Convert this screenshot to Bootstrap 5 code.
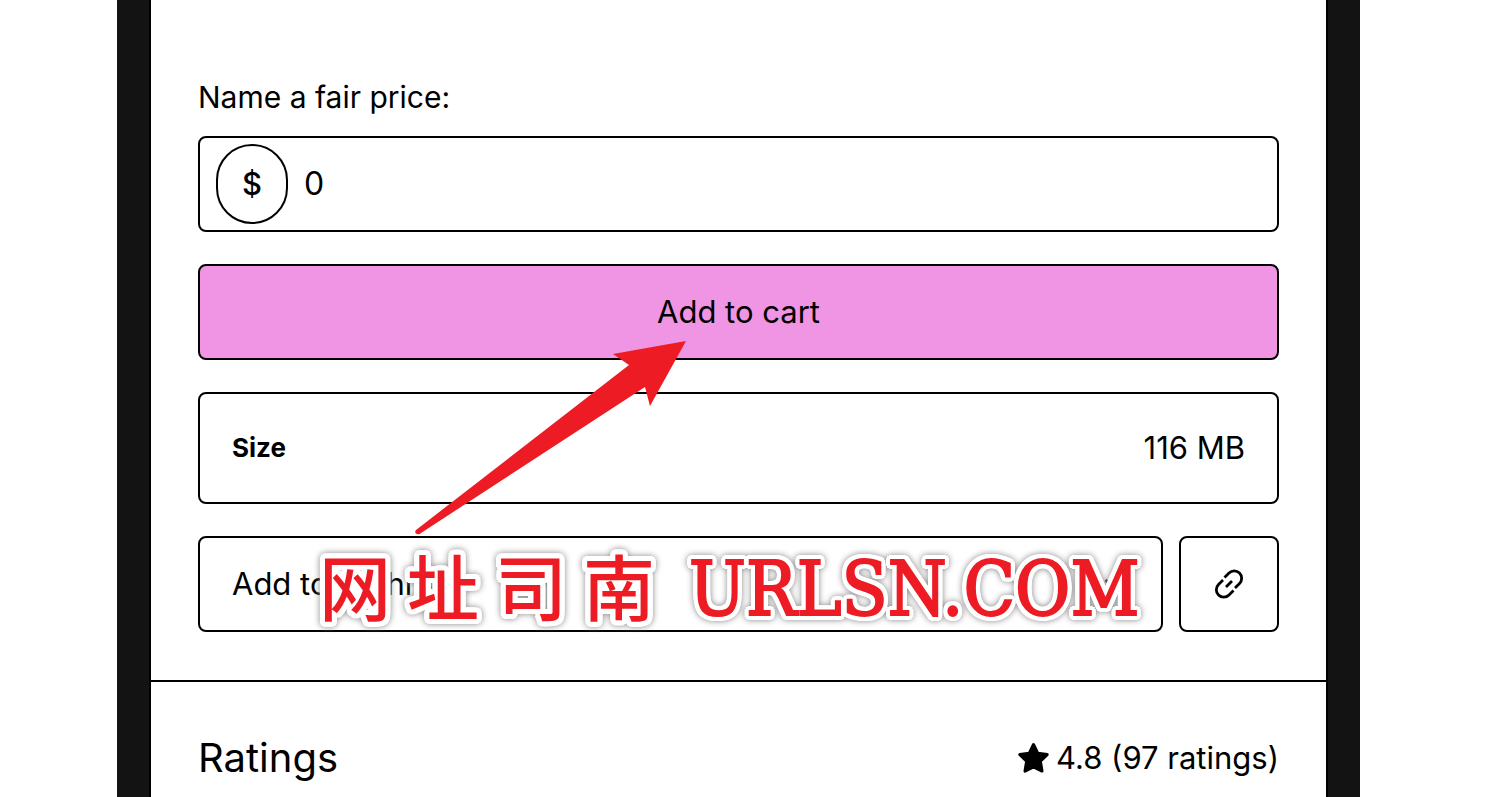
<!DOCTYPE html>
<html lang="en">
<head>
<meta charset="utf-8">
<meta name="viewport" content="width=device-width, initial-scale=1">
<title>Add to cart</title>
<link href="https://cdn.jsdelivr.net/npm/bootstrap@5.3.0/dist/css/bootstrap.min.css" rel="stylesheet">
<style>
body { font-family: Inter, "Noto Sans CJK SC", sans-serif; font-size: 31px; line-height: 44px; color: #000; background: #fff; }
.frame { margin-left: 117px; margin-right: 140px; border: solid #131313; border-width: 0 32px; }
.product { border: solid #000; border-width: 0 2px; }
.buy { padding: 74px 47px 48px; border-bottom: 2px solid #000; }
.buy label { font-size: 30px; line-height: 46px; }
.fields { gap: 32px; }
.boxed { border: 2px solid #000; border-radius: 8px; background: #fff; color: #000; }
.boxed.price { height: 96px; padding: 6px 16px; gap: 16px; }
.pill { width: 72px; height: 80px; border: 2px solid #000; border-radius: 36px; font-weight: 500; }
.price input { font-size: 32px; color: #000; outline: 0; }
.boxed.cart { height: 96px; background: #f094e4; }
.size-row { height: 112px; padding: 0 32px; }
.size-row dt { font-size: 26px; }
.wish { gap: 16px; }
.wish select, .wish button { height: 96px; }
.wish select { appearance: none; padding: 0 32px; min-width: 0; }
.wish button { width: 100px; }
.chevron { position: absolute; right: 32px; top: 32px; }
.ratings { padding: 48px 47px 0; line-height: 56px; }
.ratings h2 { font-size: 40px; line-height: 56px; font-weight: 400; }
.score { gap: 6px; }
.arrow { position: absolute; left: 217px; top: 204px; pointer-events: none; }
.watermark { position: absolute; left: 121px; top: 4px; gap: 16px; white-space: nowrap; pointer-events: none; color: #ed1c24; text-shadow: 5px 0 #fff, -5px 0 #fff, 0 5px #fff, 0 -5px #fff, 4px 4px #fff, -4px 4px #fff, 4px -4px #fff, -4px -4px #fff, 5px 2px #fff, -5px 2px #fff, 5px -2px #fff, -5px -2px #fff, 2px 5px #fff, -2px 5px #fff, 2px -5px #fff, -2px -5px #fff; filter: drop-shadow(0 0 3px #888); }
.watermark .han { font: 500 72px/88px "Noto Sans CJK SC", sans-serif; }
.watermark .latin { font: 400 75px/98px "DejaVu Serif Condensed", "DejaVu Serif", serif; -webkit-text-stroke: 2px #ed1c24; margin-left: 18px; }
</style>
</head>
<body>
<div class="frame">
  <main class="product min-vh-100">
    <section class="buy">
      <form onsubmit="return false">
        <label for="price" class="d-block mb-3">Name a fair price:</label>
        <div class="fields d-flex flex-column position-relative">
          <div class="boxed price d-flex align-items-center">
            <span class="pill d-flex align-items-center justify-content-center flex-shrink-0">$</span>
            <input id="price" type="text" value="0" class="border-0 p-0 flex-grow-1 bg-transparent">
          </div>
          <button type="submit" class="boxed cart w-100">Add to cart</button>
          <dl class="boxed size-row d-flex align-items-center justify-content-between m-0">
            <dt>Size</dt>
            <dd class="m-0">116 MB</dd>
          </dl>
          <div class="wish d-flex position-relative">
            <div class="position-relative flex-grow-1">
              <select class="boxed w-100 d-block" aria-label="Add to wishlist"><option>Add to wishlist</option></select>
              <svg class="chevron" width="32" height="32" viewBox="0 0 24 24" fill="none" stroke="#000" stroke-width="2" aria-hidden="true"><path d="M5 9l7 7 7-7"/></svg>
            </div>
            <button type="button" class="boxed d-flex align-items-center justify-content-center p-0" aria-label="Copy link">
              <svg width="32" height="32" viewBox="0 0 32 32" fill="none" stroke="#000" stroke-width="2.8" aria-hidden="true"><path d="M11.500 9.500L16 5a7.200 7.200 0 0 1 10.500 10.500L22 20M20.500 22.500L16 27A7.200 7.200 0 0 1 5.500 16.500L10 12M13 19l6-6"/></svg>
            </button>
            <div class="watermark d-flex">
              <span class="han">网</span><span class="han">址</span><span class="han">司</span><span class="han">南</span>
              <span class="latin">URLSN.COM</span>
            </div>
          </div>
          <svg class="arrow" width="272" height="196" viewBox="415 340 272 196" aria-hidden="true"><path fill="#ed1c24" d="M686 341L613 354L629 365L416 530Q414 533 417 534Q419 535 421 533L645 387L650 406Z"/></svg>
        </div>
      </form>
    </section>
    <section class="ratings d-flex justify-content-between align-items-center">
      <h2 class="m-0">Ratings</h2>
      <div class="score d-flex align-items-center">
        <svg width="33" height="32" viewBox="0 0 32 32" aria-hidden="true"><path d="M16 2.500l4.200 8.700 9.500 1.400-6.800 6.700 1.600 9.800-8.500-4.200-8.500 4.200 1.600-9.800-6.800-6.700 9.500-1.400z" stroke="#000" stroke-width="3" stroke-linejoin="round"/></svg>
        <span>4.8 (97 ratings)</span>
      </div>
    </section>
  </main>
</div>
<script src="https://cdn.jsdelivr.net/npm/bootstrap@5.3.0/dist/js/bootstrap.bundle.min.js"></script>
</body>
</html>
